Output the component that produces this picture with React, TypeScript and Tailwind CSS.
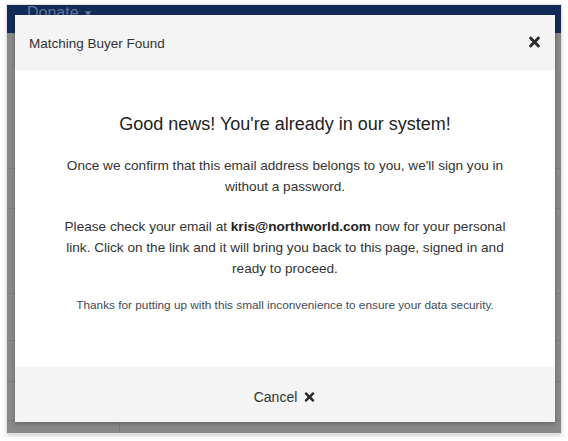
import { FaTimes } from "react-icons/fa";

const font = { fontFamily: '"Liberation Sans", Arial, sans-serif' };

function Backdrop() {
  return (
    <div className="flex h-full w-full flex-col bg-[#898989]">
      <div className="flex h-[28px] shrink-0 items-start bg-[#132b57] pl-[20px]">
        <span className="-mt-[2px] text-[16px] leading-[20px] text-[#62769c]">
          Donate <span className="text-[10px] align-middle">▼</span>
        </span>
      </div>
      <div className="relative flex-1">
        {/* dimmed table rows behind the modal */}
        <div className="flex h-full flex-col">
          <div className="h-[136px] border-b border-[#7c7c7c]" />
          <div className="h-[40px] border-b border-[#7c7c7c]" />
          <div className="h-[85px] border-b border-[#7c7c7c]" />
          <div className="h-[47px] border-b border-[#7c7c7c]" />
          <div className="h-[41px] border-b border-[#7c7c7c]" />
          <div className="h-[39px] border-b border-[#7c7c7c]" />
          <div className="ml-[112px] flex-1 border-l border-[#7c7c7c]" />
        </div>
      </div>
    </div>
  );
}

function Modal() {
  return (
    <div className="absolute left-[8px] top-[10px] flex h-[407px] w-[540px] flex-col bg-white shadow-[0_2px_4px_rgba(0,0,0,0.25)]">
      <div className="relative z-10 flex h-[53px] shrink-0 items-center justify-between bg-[#f4f4f4] pl-[14px] pr-[13px] shadow-[0_1px_3px_rgba(0,0,0,0.12)]">
        <span className="pt-[5px] text-[13.5px] text-[#333]">Matching Buyer Found</span>
        <FaTimes className="h-[16px] w-[15px] text-[#2b2b2b]" />
      </div>
      <div className="flex flex-1 flex-col items-center px-[40px] pt-[44px] text-center text-[#333]">
        <h1 className="text-[18px] leading-[24px] text-[#222]">
          Good news! You're already in our system!
        </h1>
        <p className="mt-[19px] text-[13.6px] leading-[21px]">
          Once we confirm that this email address belongs to you, we'll sign you in without a password.
        </p>
        <p className="mt-[19px] text-[13.6px] leading-[21px]">
          Please check your email at <b className="text-[#222]">kris@northworld.com</b> now for your personal
          link. Click on the link and it will bring you back to this page, signed in and ready to proceed.
        </p>
        <p className="mt-[18px] text-[11.8px] leading-[16px] text-[#3f4a5a]">
          Thanks for putting up with this small inconvenience to ensure your data security.
        </p>
      </div>
      <div className="flex h-[55px] shrink-0 items-center justify-center gap-[6px] bg-[#f4f4f4] pt-[5px] text-[14px] text-[#333]">
        <span>Cancel</span>
        <FaTimes className="h-[14px] w-[13px] text-[#2b2b2b]" />
      </div>
    </div>
  );
}

export default function App() {
  return (
    <div className="h-[441px] w-[568px] overflow-hidden bg-white pl-[7px] pt-[5px]" style={font}>
      <div className="relative h-[428px] w-[554px] shadow-[0_0_0_1px_#e2e2e2,0_2px_4px_rgba(0,0,0,0.25)]">
        <Backdrop />
        <Modal />
      </div>
    </div>
  );
}
